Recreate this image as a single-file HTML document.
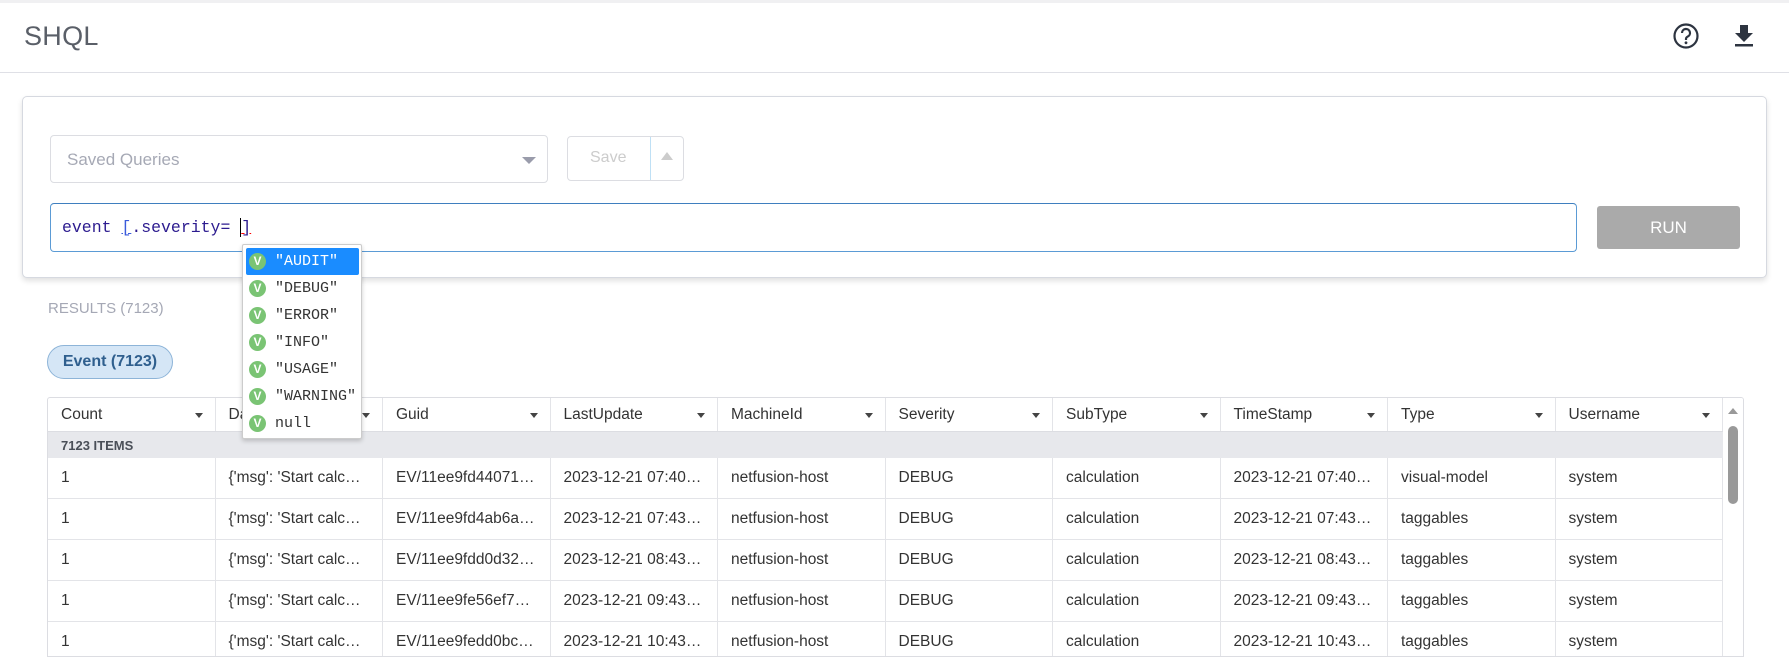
<!DOCTYPE html>
<html><head><meta charset="utf-8"><style>
*{box-sizing:border-box;margin:0;padding:0}
body{width:1789px;height:644px;overflow:hidden;background:#fff;font-family:"Liberation Sans",sans-serif;position:relative;color:#333}
.abs{position:absolute}
.topline{left:0;top:0;width:1789px;height:3px;background:#f0f0f2}
.title{left:24px;top:21px;font-size:27px;color:#5a5f68;letter-spacing:0.3px}
.hline{left:0;top:72px;width:1789px;height:1px;background:#dfe0e6}
.card{left:22px;top:96px;width:1745px;height:182px;border:1px solid #d6d9e0;border-radius:5px;box-shadow:0 3px 6px rgba(0,0,0,0.12);background:#fff}
.sq{left:50px;top:135px;width:498px;height:48px;border:1px solid #dcdde2;border-radius:4px;font-size:17px;color:#a6a9b5;padding:14px 0 0 16px}
.caret{left:522px;top:157px;width:0;height:0;border-left:7px solid transparent;border-right:7px solid transparent;border-top:7px solid #9a9cab}
.save{left:567px;top:136px;width:117px;height:45px;border:1px solid #dcdde2;border-radius:4px}
.save .t{position:absolute;left:22px;top:12px;font-size:16px;color:#ccc}
.save .d{position:absolute;left:82px;top:0;width:1px;height:43px;background:#bfe0f5}
.save .up{position:absolute;left:93px;top:15px;border-left:6px solid transparent;border-right:6px solid transparent;border-bottom:8px solid #ccc}
.inp{left:50px;top:203px;width:1527px;height:49px;border:1px solid #5b9bd5;border-top-color:#3f7fbf;border-radius:4px}
.code{left:62px;top:218px;font-family:"Liberation Mono",monospace;font-size:16.5px;color:#2c1b8f}
.run{left:1597px;top:206px;width:143px;height:43px;background:#aaa;border-radius:3px;color:#fff;font-size:17px;text-align:center;line-height:43px}
.pop{left:242px;top:244px;width:120px;height:195px;background:#fff;border:1px solid #ccc;box-shadow:0 2px 5px rgba(0,0,0,0.2);border-radius:2px}
.it{position:absolute;left:3px;width:113px;height:27px;font-family:"Liberation Mono",monospace;font-size:15px;color:#333;line-height:27px;padding-left:29px;transform-origin:left center}
.it.sel{background:#1a8cff;color:#fff;border-radius:2px}
.v{position:absolute;left:3px;top:5px;width:17px;height:17px;border-radius:50%;background:#7ac474;color:#fff;font-family:"Liberation Sans",sans-serif;font-weight:bold;font-size:12px;line-height:17px;text-align:center;padding:0}
.res{left:48px;top:300px;font-size:15px;color:#a5a8b5}
.pill{left:47px;top:345px;width:126px;height:34px;border:1px solid #8db4d8;background:#d5e6f6;border-radius:17px;font-size:16px;font-weight:bold;color:#2f5f8e;text-align:center;line-height:32px}
.tbl{left:47px;top:397px;width:1697px;height:260px;border:1px solid #dcdde2;border-radius:3px 3px 0 0;overflow:hidden}
.row{position:absolute;left:0;width:1675px;display:flex}
.c{width:167.5px;flex:none;border-right:1px solid #e3e4e8;padding-left:13px;font-size:15.5px;color:#333;position:relative;white-space:nowrap;overflow:hidden}
.hdr{top:0;height:34px;border-bottom:1px solid #dcdde2}
.hdr .c{line-height:33px}
.hdr .c:after{content:"";position:absolute;right:12px;top:15px;border-left:4px solid transparent;border-right:4px solid transparent;border-top:5px solid #444}
.grp{position:absolute;left:0;top:34px;width:1675px;height:26px;background:#e7e8ec;font-size:13px;font-weight:bold;color:#4a4f58;padding:6px 0 0 13px}
.dr{height:41px;border-bottom:1px solid #e3e4e8}
.dr .c{line-height:40px}
.sb{position:absolute;left:1675px;top:0;width:21px;height:260px;background:#fff}
.sbup{position:absolute;left:5px;top:10px;border-left:5px solid transparent;border-right:5px solid transparent;border-bottom:6px solid #999}
.thumb{position:absolute;left:5px;top:28px;width:10px;height:78px;background:#999;border-radius:5px}
</style></head><body>
<div class="abs topline"></div>
<div class="abs title">SHQL</div>
<svg class="abs" style="left:1672px;top:22px" width="28" height="28" viewBox="0 0 28 28"><circle cx="14" cy="14" r="11.5" fill="none" stroke="#2d3440" stroke-width="2.2"/><path d="M10 11a4 4 0 1 1 5.5 3.7c-1 .5-1.5 1.2-1.5 2.3v1" fill="none" stroke="#2d3440" stroke-width="2.2"/><circle cx="14" cy="20.8" r="1.4" fill="#2d3440"/></svg>
<svg class="abs" style="left:1733px;top:24px" width="22" height="24" viewBox="0 0 22 24"><path d="M7 1h8v8h5L11 18 2 9h5z" fill="#2d3440"/><rect x="2" y="20" width="18" height="2.5" fill="#2d3440"/></svg>
<div class="abs hline"></div>
<div class="abs card"></div>
<div class="abs sq">Saved Queries</div>
<div class="abs caret"></div>
<div class="abs save"><span class="t">Save</span><span class="d"></span><span class="up"></span></div>
<div class="abs inp"></div>
<div class="abs code">event <span style="color:#3b5bdb;text-decoration:underline">[</span>.severity= <span style="border-left:1px solid #000;text-decoration:underline;text-decoration-color:red">]</span></div>
<div class="abs run">RUN</div>
<div class="abs res">RESULTS (7123)</div>
<div class="abs pill">Event (7123)</div>
<div class="abs tbl">
<div class="row hdr"><div class="c">Count</div><div class="c">Data</div><div class="c">Guid</div><div class="c">LastUpdate</div><div class="c">MachineId</div><div class="c">Severity</div><div class="c">SubType</div><div class="c">TimeStamp</div><div class="c">Type</div><div class="c">Username</div></div>
<div class="grp">7123 ITEMS</div>
<div class="row dr" style="top:60px"><div class="c">1</div><div class="c">{'msg': 'Start calc…</div><div class="c">EV/11ee9fd44071…</div><div class="c">2023-12-21 07:40…</div><div class="c">netfusion-host</div><div class="c">DEBUG</div><div class="c">calculation</div><div class="c">2023-12-21 07:40…</div><div class="c">visual-model</div><div class="c">system</div></div>
<div class="row dr" style="top:101px"><div class="c">1</div><div class="c">{'msg': 'Start calc…</div><div class="c">EV/11ee9fd4ab6a…</div><div class="c">2023-12-21 07:43…</div><div class="c">netfusion-host</div><div class="c">DEBUG</div><div class="c">calculation</div><div class="c">2023-12-21 07:43…</div><div class="c">taggables</div><div class="c">system</div></div>
<div class="row dr" style="top:142px"><div class="c">1</div><div class="c">{'msg': 'Start calc…</div><div class="c">EV/11ee9fdd0d32…</div><div class="c">2023-12-21 08:43…</div><div class="c">netfusion-host</div><div class="c">DEBUG</div><div class="c">calculation</div><div class="c">2023-12-21 08:43…</div><div class="c">taggables</div><div class="c">system</div></div>
<div class="row dr" style="top:183px"><div class="c">1</div><div class="c">{'msg': 'Start calc…</div><div class="c">EV/11ee9fe56ef7…</div><div class="c">2023-12-21 09:43…</div><div class="c">netfusion-host</div><div class="c">DEBUG</div><div class="c">calculation</div><div class="c">2023-12-21 09:43…</div><div class="c">taggables</div><div class="c">system</div></div>
<div class="row dr" style="top:224px"><div class="c">1</div><div class="c">{'msg': 'Start calc…</div><div class="c">EV/11ee9fedd0bc…</div><div class="c">2023-12-21 10:43…</div><div class="c">netfusion-host</div><div class="c">DEBUG</div><div class="c">calculation</div><div class="c">2023-12-21 10:43…</div><div class="c">taggables</div><div class="c">system</div></div>
<div class="sb"><div class="sbup"></div><div class="thumb"></div></div>
</div>
<div class="abs pop">
<div class="it sel" style="top:3px"><span class="v">V</span>"AUDIT"</div>
<div class="it" style="top:30px"><span class="v">V</span>"DEBUG"</div>
<div class="it" style="top:57px"><span class="v">V</span>"ERROR"</div>
<div class="it" style="top:84px"><span class="v">V</span>"INFO"</div>
<div class="it" style="top:111px"><span class="v">V</span>"USAGE"</div>
<div class="it" style="top:138px"><span class="v">V</span>"WARNING"</div>
<div class="it" style="top:165px"><span class="v">V</span>null</div>
</div>
</body></html>
